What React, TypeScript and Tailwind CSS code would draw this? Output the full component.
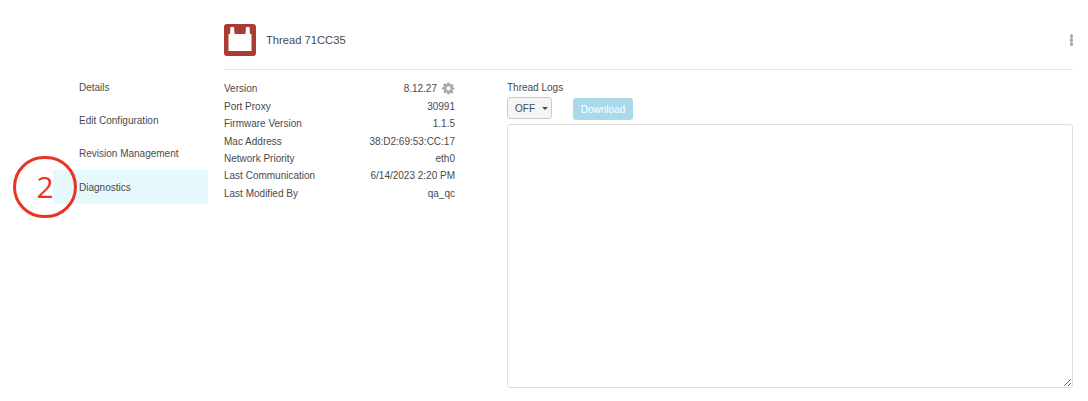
import { useState } from 'react'

const navItems = ['Details', 'Edit Configuration', 'Revision Management', 'Diagnostics']

const details = [
  { label: 'Version', value: '8.12.27' },
  { label: 'Port Proxy', value: '30991' },
  { label: 'Firmware Version', value: '1.1.5' },
  { label: 'Mac Address', value: '38:D2:69:53:CC:17' },
  { label: 'Network Priority', value: 'eth0' },
  { label: 'Last Communication', value: '6/14/2023 2:20 PM' },
  { label: 'Last Modified By', value: 'qa_qc' },
]

function GearIcon() {
  return (
    <svg viewBox="0 0 24 24" className="w-[13px] h-[13px] text-[#a9a9a9]" fill="currentColor">
      <path
        fillRule="evenodd"
        d="M10 1h4l.6 3.1 1.7.7 2.6-1.8 2.8 2.8-1.8 2.6.7 1.7L23 10v4l-3.1.6-.7 1.7 1.8 2.6-2.8 2.8-2.6-1.8-1.7.7L14 23h-4l-.6-3.1-1.7-.7-2.6 1.8-2.8-2.8 1.8-2.6-.7-1.7L0 14v-4l3.1-.6.7-1.7L2 5.1 4.8 2.3l2.6 1.8 1.7-.7zM12 8a4 4 0 1 0 0 8 4 4 0 0 0 0-8z"
      />
    </svg>
  )
}

function ThreadIcon() {
  return (
    <div className="w-8 h-8 rounded-[3px] bg-[#ab3c33]">
      <svg viewBox="0 0 32 32" className="w-8 h-8" fill="#ffffff">
        <path d="M4.5 10H6L6.5 3H10L10.5 10H21.5L22 3H25.5L26 10H27.5V27H4.5Z" />
      </svg>
    </div>
  )
}

export default function App() {
  const [logLevel] = useState('OFF')

  return (
    <div className="relative w-[1088px] h-[401px] flex bg-white overflow-hidden text-[#4a4a4a] text-[10px] font-['Liberation_Sans',Arial,sans-serif]">
      {/* Side navigation */}
      <nav className="w-[155px] ml-[53px] mt-[70.5px] flex flex-col shrink-0">
        {navItems.map((item) => (
          <a
            key={item}
            className={
              item === 'Diagnostics'
                ? 'h-[33.3px] pl-[26px] flex items-center bg-[#e5f8fc]'
                : 'h-[33.3px] pl-[26px] flex items-center'
            }
          >
            {item}
          </a>
        ))}
      </nav>

      <main className="w-[849px] ml-4 shrink-0">
        <header className="h-[70px] pt-6 border-b border-[#e6e6e6] flex items-start">
          <ThreadIcon />
          <span className="ml-[10px] mt-[9px] text-[11.2px] leading-[14px]">Thread 71CC35</span>
          <div className="ml-auto mt-[10px] flex flex-col gap-[0.5px]">
            <span className="w-[3.5px] h-[3.5px] rounded-full bg-[#aaaaaa]" />
            <span className="w-[3.5px] h-[3.5px] rounded-full bg-[#aaaaaa]" />
            <span className="w-[3.5px] h-[3.5px] rounded-full bg-[#aaaaaa]" />
          </div>
        </header>

        <div className="flex">
          {/* Thread properties */}
          <div className="w-[231px] pt-[10px] shrink-0">
            {details.map((row) => (
              <div key={row.label} className="h-[17.45px] flex items-center justify-between">
                <span>{row.label}</span>
                <span className="flex items-center gap-[5px]">
                  {row.value}
                  {row.label === 'Version' && <GearIcon />}
                </span>
              </div>
            ))}
          </div>

          {/* Logs */}
          <div className="ml-[52px] w-[566px] shrink-0 pt-[11px]">
            <div className="leading-[13px]">Thread Logs</div>
            <div className="mt-[3px] flex items-start">
              <button className="w-[45px] h-[22px] pl-[7px] flex items-center gap-[7px] rounded-[3px] border border-[#cccccc] bg-[#f5f5f5] text-[#4a4a4a]">
                {logLevel}
                <span className="w-0 h-0 border-x-[3px] border-x-transparent border-t-[3px] border-t-[#4a4a4a]" />
              </button>
              <button className="ml-[21px] mt-[1px] w-[60px] h-[22px] rounded-[3px] bg-[#a9d9eb] text-white text-[10px]">
                Download
              </button>
            </div>
            <textarea className="block mt-[4px] w-[566px] h-[264px] rounded-[3px] border border-[#dddddd] outline-none" />
          </div>
        </div>
      </main>

      {/* Annotation marker drawn over the page */}
      <div className="absolute left-[13px] top-[156px] w-[64px] h-[62px] rounded-full border-[3px] border-[#e93323] flex items-center justify-center text-[#e93323] text-[30px] leading-none font-medium font-['Open_Sans',sans-serif]">
        2
      </div>
    </div>
  )
}
